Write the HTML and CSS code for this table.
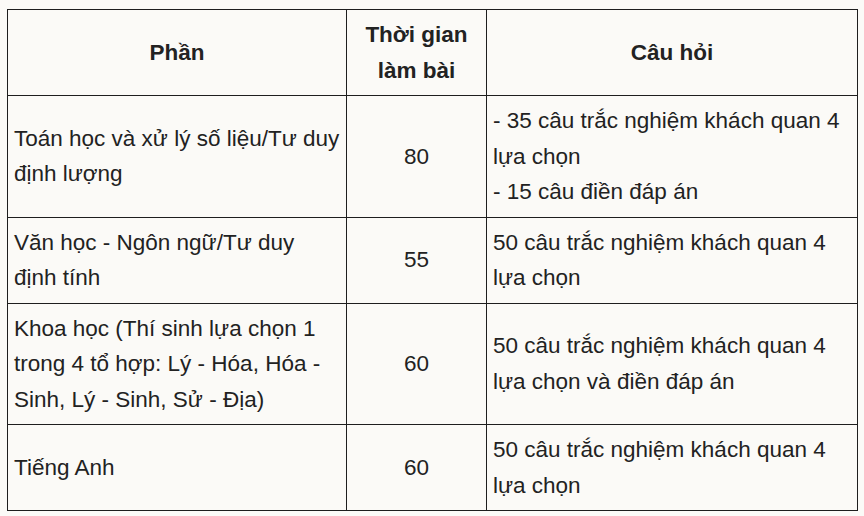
FILE: index.html
```
<!DOCTYPE html>
<html lang="vi">
<head>
<meta charset="utf-8">
<link rel="stylesheet" href="styles.css">
</head>
<body>
<table class="exam">
  <colgroup>
    <col class="c1">
    <col class="c2">
    <col class="c3">
  </colgroup>
  <thead>
    <tr>
      <th>Phần</th>
      <th>Thời gian<br>làm bài</th>
      <th>Câu hỏi</th>
    </tr>
  </thead>
  <tbody>
    <tr>
      <td>Toán học và xử lý số liệu/Tư duy định lượng</td>
      <td class="num">80</td>
      <td>- 35 câu trắc nghiệm khách quan 4 lựa chọn<br>- 15 câu điền đáp án</td>
    </tr>
    <tr>
      <td>Văn học - Ngôn ngữ/Tư duy định tính</td>
      <td class="num">55</td>
      <td>50 câu trắc nghiệm khách quan 4 lựa chọn</td>
    </tr>
    <tr>
      <td>Khoa học (Thí sinh lựa chọn 1 trong 4 tổ hợp: Lý - Hóa, Hóa - Sinh, Lý - Sinh, Sử - Địa)</td>
      <td class="num">60</td>
      <td>50 câu trắc nghiệm khách quan 4 lựa chọn và điền đáp án</td>
    </tr>
    <tr>
      <td>Tiếng Anh</td>
      <td class="num">60</td>
      <td>50 câu trắc nghiệm khách quan 4 lựa chọn</td>
    </tr>
  </tbody>
</table>
</body>
</html>
```
FILE: styles.css
```
html, body {
  margin: 0;
  background: #fbfaf7;
}
body {
  padding: 9px 0 0 7px;
  font-family: "Liberation Sans", Arial, sans-serif;
  font-size: 22.5px;
  line-height: 35.5px;
  color: #222222;
}
.exam {
  border-collapse: collapse;
  table-layout: fixed;
  width: 850px;
}
.c1 { width: 339px; }
.c2 { width: 140px; }
.c3 { width: 371px; }
.exam th, .exam td {
  border: 1px solid #1e1e1e;
  padding: 7px 6px;
  vertical-align: middle;
  text-align: left;
}
.exam th {
  font-weight: bold;
  text-align: center;
}
.exam td.num {
  text-align: center;
}
```
